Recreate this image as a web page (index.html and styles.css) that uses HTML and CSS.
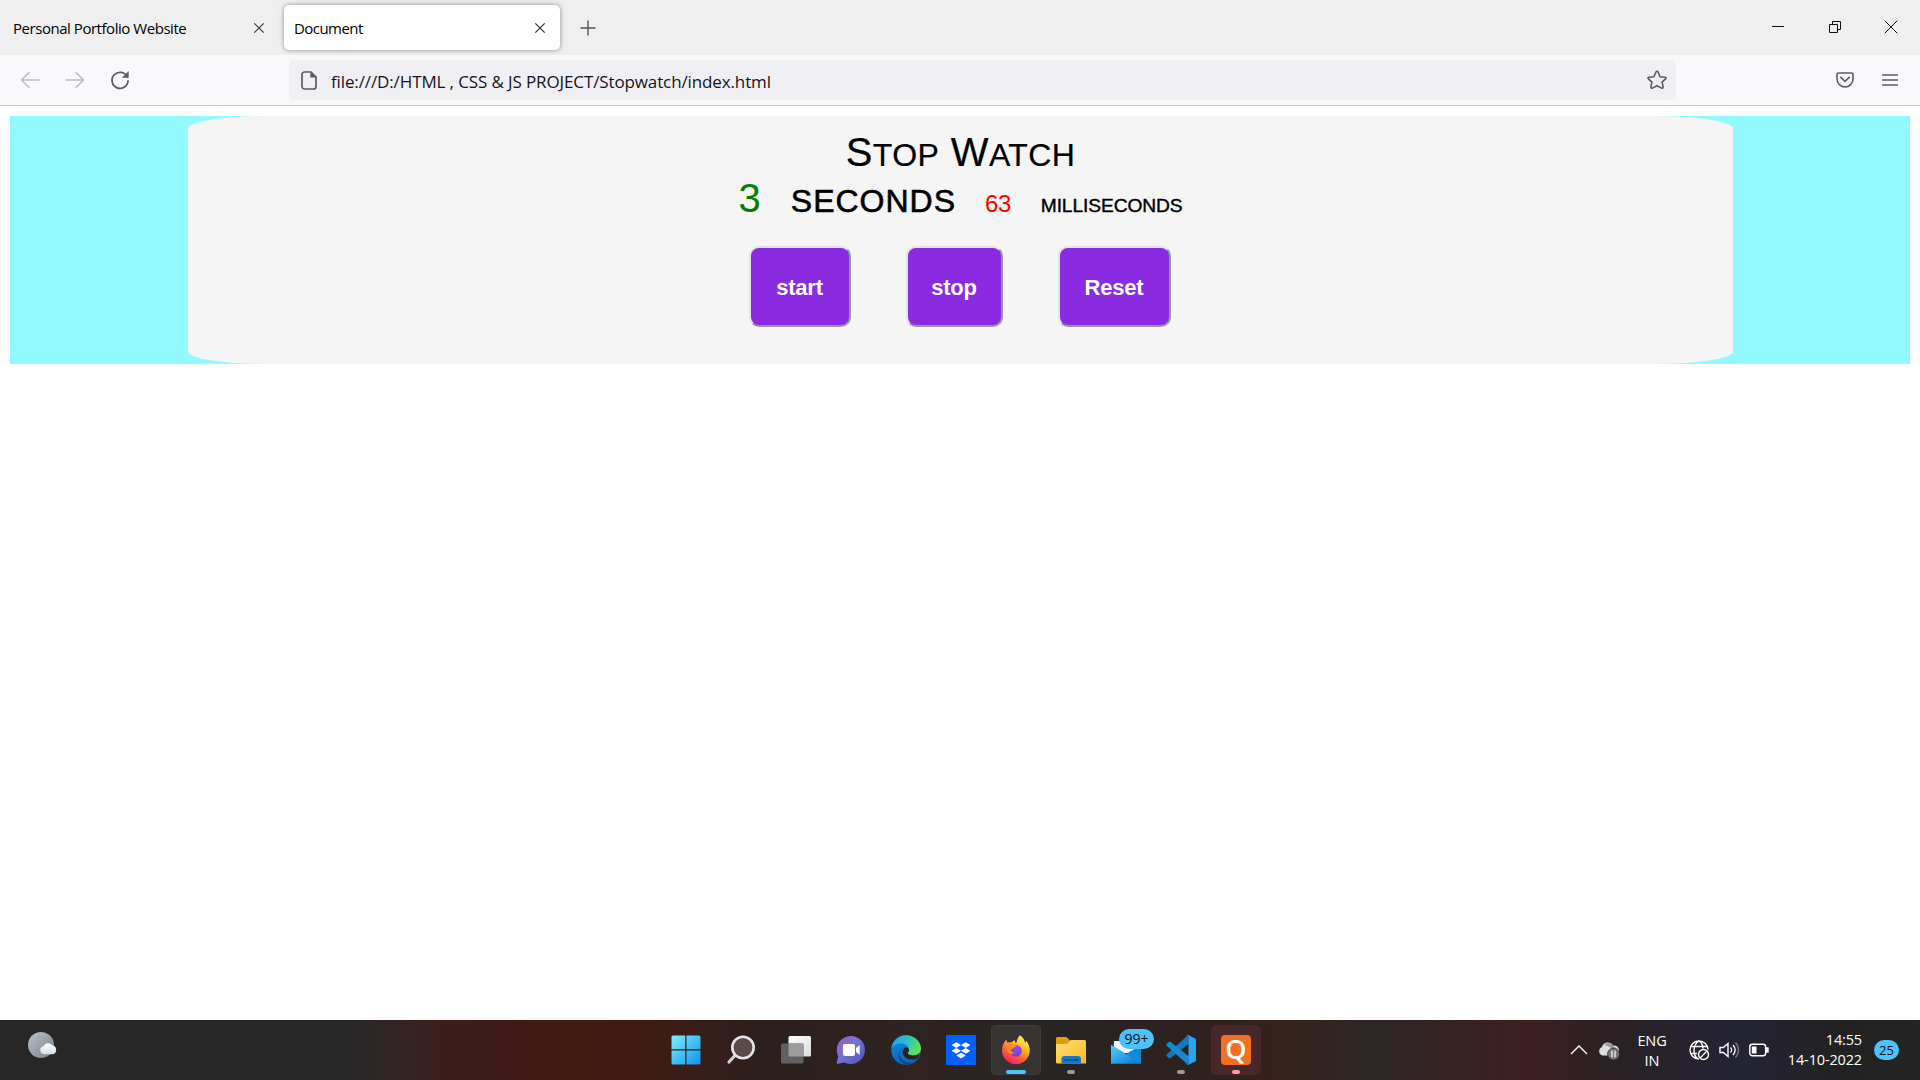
FILE: index.html
```html
<!DOCTYPE html>
<html lang="en">
<head>
<meta charset="utf-8">
<title>Document</title>
<link rel="stylesheet" href="styles.css">
</head>
<body>
<div class="tabs">
  <div class="tab"><span class="tab-name tab-name-long">Personal Portfolio Website</span><svg class="x" viewBox="0 0 12 12"><path d="M1.3 1.3l9.4 9.4M10.7 1.3l-9.4 9.4"/></svg></div>
  <div class="tab active"><span class="tab-name">Document</span><svg class="x" viewBox="0 0 12 12"><path d="M1.3 1.3l9.4 9.4M10.7 1.3l-9.4 9.4"/></svg></div>
  <svg class="plus" viewBox="0 0 16 16"><path d="M8 .5v15M.5 8h15"/></svg>
  <div class="window-buttons">
    <svg viewBox="0 0 14 14"><path d="M1 6.500h12"/></svg>
    <svg viewBox="0 0 14 14"><path d="M1.500 4.500h8v8h-8zM4.500 4V1.500h8v8H10"/></svg>
    <svg viewBox="0 0 14 14"><path d="M.8.8l12.400 12.400M13.200.8L.8 13.200"/></svg>
  </div>
</div>
<div class="toolbar">
  <svg class="nav-icon dim" viewBox="0 0 20 20"><path d="M19 10H1.500M9 2.500L1.500 10 9 17.500"/></svg>
  <svg class="nav-icon dim" viewBox="0 0 20 20"><path d="M1 10h17.500M11 2.500l7.500 7.500-7.500 7.500"/></svg>
  <svg class="nav-icon" viewBox="0 0 20 20"><path d="M17.300 7A8 8 0 1 0 18 11"/><path class="solid" d="M18.700 1v6.800h-6.800z"/></svg>
  <div class="address">
    <svg class="file" viewBox="0 0 16 19"><path d="M3.500 1H10l5 5v9.500a2.500 2.500 0 0 1-2.500 2.500h-9A2.500 2.500 0 0 1 1 15.500v-12A2.500 2.500 0 0 1 3.500 1z"/><path class="solid" d="M9.300 1v5.500H15z"/></svg>
    <span class="url">file:///D:/HTML , CSS &amp; JS PROJECT/Stopwatch/index.html</span>
    <svg class="star" viewBox="0 0 20 20"><path d="M10 1.200c.6 0 .9.400 1.100.8l2 4.700 4.900.5c1.100.1 1.400 1 .6 1.700l-3.500 3.200 1 4.900c.2 1-.6 1.600-1.500 1.100L10 15.700l-4.600 2.400c-.9.500-1.700-.1-1.500-1.100l1-4.900-3.500-3.200c-.8-.7-.5-1.600.6-1.700l4.900-.5 2-4.700c.2-.4.500-.8 1.100-.8z"/></svg>
  </div>
  <div class="tools">
    <svg class="pocket" viewBox="0 0 18 16"><path d="M2.500 1h13A1.500 1.500 0 0 1 17 2.500V7A8 8 0 0 1 1 7V2.500A1.500 1.500 0 0 1 2.500 1zM4.800 5.300L9 9.300l4.200-4"/></svg>
    <svg class="menu" viewBox="0 0 16 14"><path d="M.7 2h14.600M.7 7h14.600M.7 12h14.600"/></svg>
  </div>
</div>
<main class="page">
  <div class="band">
    <section class="watch">
      <div class="title">S<span class="caps">TOP</span> W<span class="caps">ATCH</span></div>
      <div class="readout">
        <span class="sec">3</span><span class="sec-label">SECONDS</span><span class="ms">63</span><span class="ms-label">MILLISECONDS</span>
      </div>
      <div class="actions">
        <button class="start">start</button>
        <button class="stop">stop</button>
        <button class="reset">Reset</button>
      </div>
    </section>
  </div>
</main>
<footer class="taskbar">
  <svg class="weather" viewBox="0 0 30 28">
    <defs>
      <linearGradient id="moon" x1="0" y1="0" x2="1" y2="1"><stop offset="0" stop-color="#b9c2ca"/><stop offset="1" stop-color="#77818b"/></linearGradient>
      <linearGradient id="puff" x1="0" y1="0" x2="0" y2="1"><stop offset="0" stop-color="#fff"/><stop offset="1" stop-color="#d9dde2"/></linearGradient>
    </defs>
    <circle cx="13" cy="13" r="13" fill="url(#moon)"/>
    <path d="M16 22.300a4.200 4.200 0 0 1-.3-8.300 5 5 0 0 1 8.600-.7 4.600 4.600 0 0 1 .4 9z" fill="url(#puff)"/>
  </svg>
  <div class="apps">
    <div class="app"><svg viewBox="0 0 30 30">
      <defs><linearGradient id="win" x1="0" y1="0" x2="1" y2="1"><stop offset="0" stop-color="#7df0fc"/><stop offset="1" stop-color="#0c93ec"/></linearGradient></defs>
      <path fill="url(#win)" d="M2 .5h12.300v13.800H.500V2A1.500 1.500 0 0 1 2 .5zM15.500.5H28a1.500 1.500 0 0 1 1.500 1.500v12.300h-14zM.5 15.500h13.800v14H2A1.500 1.500 0 0 1 .5 28zM15.500 15.500h14V28a1.500 1.500 0 0 1-1.500 1.500H15.500z"/></svg></div>
    <div class="app"><svg viewBox="0 0 30 30"><path d="M8.500 21L3 27" stroke="#d2d2d4" stroke-width="3.200" stroke-linecap="round"/><circle cx="17" cy="12.500" r="10.700" fill="#5b4a47" stroke="#e6e6e8" stroke-width="2.600"/></svg></div>
    <div class="app"><svg viewBox="0 0 30 30">
      <defs><linearGradient id="pane" x1="0" y1="0" x2="1" y2="1"><stop offset="0" stop-color="#fff"/><stop offset="1" stop-color="#dcdcdc"/></linearGradient></defs>
      <rect x="7.500" y="1" width="22.500" height="20.500" rx="1.500" fill="url(#pane)"/><rect x="0" y="8.500" width="22.500" height="20" rx="1.500" fill="#616161"/><path d="M7.500 8.500h15v13H9a1.500 1.500 0 0 1-1.500-1.500z" fill="#9c9c9c"/></svg></div>
    <div class="app"><svg viewBox="0 0 30 30">
      <defs><linearGradient id="chat" x1="0" y1="0" x2="1" y2="1"><stop offset="0" stop-color="#a05bb9"/><stop offset=".45" stop-color="#7574d4"/><stop offset="1" stop-color="#4750bb"/></linearGradient></defs>
      <path d="M15 1a14 14 0 1 1-6.500 26.400L2 28.800c-1 .2-1.600-.4-1.300-1.300l1.600-6A14 14 0 0 1 15 1z" fill="url(#chat)"/><rect x="7" y="9" width="12" height="12" rx="2" fill="#fff"/><path d="M20 13l3.700-3v10L20 17z" fill="#fff"/></svg></div>
    <div class="app"><svg viewBox="0 0 30 30">
      <defs>
        <linearGradient id="edge-top" x1="0" y1=".2" x2="1" y2=".6"><stop offset="0" stop-color="#2b9cdd"/><stop offset=".5" stop-color="#2bc3c7"/><stop offset="1" stop-color="#69e14c"/></linearGradient>
        <linearGradient id="edge-left" x1="0" y1="0" x2="0" y2="1"><stop offset="0" stop-color="#0a8fdd"/><stop offset="1" stop-color="#0b66bf"/></linearGradient>
      </defs>
      <circle cx="15" cy="15" r="14.800" fill="url(#edge-left)"/>
      <path d="M.4 14A14.800 14.800 0 0 1 15 .2C24 .2 30 7 30 13.300c0 4.700-3.700 7.300-7.400 7.300-4.300 0-5.900-1.400-5.900-2.500 0-.7 1.300-1.300 1.300-3.700 0-3.300-3.500-6-8-6-4.700 0-8.500 2.100-9.600 5.600z" fill="url(#edge-top)"/>
      <path d="M12.500 12.500c-5 3.500-6 10 2 14 5 2.300 10 .5 12.700-4A14.800 14.800 0 0 1 15 29.800C9 28 5.500 22 8.500 16.500c1-2 2.500-3.300 4-4z" fill="#124a8f"/>
      <path d="M16.700 18.100c0 1.100 1.600 2.500 5.900 2.500 2.500 0 4.900-1 6.400-3l-1.700 4.800c-3 2.600-9 3-12.300.6-4-2.500-4.200-8-.8-10.700 2.300.2 3.800 1.200 3.800 2.700 0 1.800-1.300 2.400-1.300 3.100z" fill="#2d201f"/></svg></div>
    <div class="app"><svg viewBox="0 0 30 30"><path fill="#0061fe" d="M0 0h30v30H0z"/><path fill="#fff" d="M10.300 7.200L15 10l-4.700 2.900L5.600 10zM19.700 7.200l4.700 2.800-4.700 2.900L15 10zM10.300 12.900l4.700 2.900-4.700 2.900-4.700-2.900zM19.700 12.900l4.700 2.900-4.700 2.900-4.700-2.900zM15 17.800l4.700 2.700L15 23.400l-4.700-2.900z"/></svg></div>
    <div class="app tile current"><svg viewBox="0 0 30 30">
      <defs>
        <linearGradient id="fox" x1=".8" y1="0" x2=".25" y2="1"><stop offset="0" stop-color="#fff44f"/><stop offset=".35" stop-color="#ffbd2e"/><stop offset=".62" stop-color="#ff6b32"/><stop offset="1" stop-color="#f5156c"/></linearGradient>
        <radialGradient id="globe" cx=".6" cy=".2" r=".9"><stop offset="0" stop-color="#a145f2"/><stop offset="1" stop-color="#5b42c4"/></radialGradient>
      </defs>
      <path d="M18.800.2c3.600 2.200 4.700 5 5.300 7.200 1-.2 1-1.200.8-2 2.800 3 3.900 6.500 3.900 9.700A13.900 13.900 0 0 1 1 15.500C1 11 2.600 7.800 5.300 4.600c.2 1.500.7 2.600 1.300 3.200 1.400-.6 2.900-.5 4-.2.8-1.300 2.200-2.200 3.400-2.400-.3 1.300 0 2.300 1.200 2.800C16 6 16.400 2.500 18.800.2z" fill="url(#fox)"/>
      <circle cx="15" cy="15.800" r="5.800" fill="url(#globe)"/>
      <path d="M6.600 8.500c2-.9 4-.6 5.300.2l3.300.6c1 .3.800 1.500-.2 2.200l-2.700 1.600c-.8 1.300-1.800 1.500-3 1.200.5 2.500 2.500 3.600 5 3.400-2.500 2-6.400 1.300-8-1.500-1.200-2.200-1-5 .3-7.700z" fill="#ff8c29"/></svg></div>
    <div class="app open"><svg viewBox="0 0 30 30">
      <defs><linearGradient id="folder" x1="0" y1="0" x2="1" y2="1"><stop offset="0" stop-color="#ffe07b"/><stop offset="1" stop-color="#fbb91a"/></linearGradient></defs>
      <path d="M1.500 2h8.700L14 5.200V11H0V3.500A1.500 1.500 0 0 1 1.500 2z" fill="#dda00d"/><path d="M0 9h9.500c2 0 3-.8 4-2.500.5-.9 1-1.500 2-1.500h13A1.500 1.500 0 0 1 30 6.500v22H1.500A1.500 1.500 0 0 1 0 27z" fill="url(#folder)"/><path d="M5.500 28.500V24a3 3 0 0 1 3-3H22a3 3 0 0 1 3 3v4.500z" fill="#1379cd"/><path d="M9 25h12.500" stroke="#0c5298" stroke-width="1.800" stroke-linecap="round"/></svg></div>
    <div class="app mail"><svg viewBox="0 0 30 30">
      <defs><linearGradient id="mail" x1="0" y1="0" x2="1" y2="1"><stop offset="0" stop-color="#54d0fa"/><stop offset="1" stop-color="#0b74ca"/></linearGradient></defs>
      <path d="M0 10L15 1l15 9v6H0z" fill="#13549a"/><path d="M3 6h24v12H3z" fill="#f4f4f4"/><path d="M0 10l15 9 15-9v18.500H0z" fill="#1688d5"/><path d="M0 10l30 18.500H0z" fill="url(#mail)"/></svg><span class="count">99+</span></div>
    <div class="app open"><svg viewBox="0 0 30 30">
      <path d="M22 .2L1 19c-.8.700-.8 1.500-.1 2.200l1.800 1.700c.6.600 1.300.6 2 .1L23 8.500z" fill="#1279bd"/><path d="M22 29.800L1 11c-.8-.7-.8-1.500-.1-2.200l1.800-1.700c.6-.6 1.300-.6 2-.1L23 21.500z" fill="#168bd2"/><path d="M22 0l6.700 3.200c.8.400 1.300 1.200 1.300 2v19.600c0 .8-.5 1.600-1.300 2L22 30c-.8.200-1.500-.1-2-.7 1 .6 2.500 0 2.500-1.400V2.100c0-1.400-1.500-2-2.500-1.400.5-.6 1.200-.9 2-.7z" fill="#2ba4ec"/></svg></div>
    <div class="app tile alert"><span class="q">Q</span></div>
  </div>
  <div class="tray">
    <svg class="chevron" viewBox="0 0 18 10"><path d="M1 9l8-8 8 8"/></svg>
    <svg class="cloud" viewBox="0 0 22 18"><path d="M4.500 13.500A4.500 4.500 0 0 1 4 5a6 6 0 0 1 11-1.500A5 5 0 0 1 17 13.500z" fill="#dedede"/><path d="M6 3a6 6 0 0 1 10 2c2 .5 3 2 3 4H15C13 5 10 4 6 3z" fill="#999"/><circle cx="15.500" cy="12" r="5.900" fill="#777" stroke="#302428" stroke-width=".8"/><path d="M14 8.800v6.400M17 8.800v6.400" stroke="#fff" stroke-width="1.200"/></svg>
    <div class="lang"><span>ENG</span><span>IN</span></div>
    <div class="status">
      <svg viewBox="0 0 20 20"><path d="M10 19A9 9 0 1 1 19 9.500M10 1C3.500 5 3.500 15 9 19M10 1c3 2 4 5 4 7.500M1.800 6.500h16.400M1.800 13.500H8"/><circle cx="14.500" cy="14.500" r="5"/><path d="M11.300 17.700l6.400-6.400"/></svg>
      <svg viewBox="0 0 20 20"><path d="M1 7.500h3.300L9 3.500v13l-4.700-4H1zM11.500 7.500c1.400 1.400 1.400 3.600 0 5M14 5c2.800 2.800 2.800 7.200 0 10"/><path class="faint" d="M16.500 2.500c4 4.200 4 10.800 0 15"/></svg>
      <svg viewBox="0 0 20 20"><rect x=".8" y="4.300" width="15.800" height="11.400" rx="2.500"/><path d="M17.700 8v4h1.300V8z"/><path class="fill" d="M2.800 6.500h4.700v7H2.800z"/></svg>
    </div>
    <div class="clock"><span>14:55</span><span>14-10-2022</span></div>
    <span class="notices">25</span>
  </div>
</footer>
</body>
</html>
```
FILE: styles.css
```css
* { box-sizing: border-box; }

body {
  margin: 0;
  height: 1080px;
  display: flex;
  flex-direction: column;
  overflow: hidden;
  background: #fff;
  color: #000;
  font-family: "Open Sans", "Noto Sans", sans-serif;
}

svg {
  display: block;
  flex: none;
  fill: none;
  overflow: visible;
}

/* Tab strip */
.tabs {
  display: flex;
  height: 55px;
  padding-top: 5px;
  background: #efefef;
}

.tab {
  display: flex;
  align-items: center;
  justify-content: space-between;
  width: 276px;
  height: 45px;
  padding: 0 14px 0 10px;
  border-radius: 5px;
  font-size: 15px;
}

.tab:first-child {
  width: 278px;
  margin-right: 6px;
  padding: 0 13px;
}

.tab.active {
  background: #fff;
  box-shadow: 0 0 5px rgba(0, 0, 0, .42);
}

.tab-name {
  letter-spacing: -.56px;
  white-space: nowrap;
}

.tab-name-long { letter-spacing: -.46px; }

.x {
  width: 12px;
  height: 12px;
  stroke: #333;
  stroke-width: 1.2;
}

.plus {
  width: 16px;
  height: 16px;
  margin: 15px 0 0 19.5px;
  stroke: #55545f;
  stroke-width: 1.4;
}

.window-buttons {
  display: flex;
  gap: 42.5px;
  margin: 15px 22px 0 auto;
}

.window-buttons svg {
  width: 14px;
  height: 14px;
  stroke: #111;
  stroke-width: 1;
}

/* Navigation */
.toolbar {
  display: flex;
  align-items: center;
  height: 51px;
  padding-left: 20px;
  background: #f9f9fb;
  border-bottom: 1px solid #ccc;
}

.nav-icon {
  width: 20px;
  height: 20px;
  margin-right: 25px;
  stroke: #5b5b66;
  stroke-width: 1.8;
  stroke-linecap: round;
  stroke-linejoin: round;
}

.nav-icon.dim {
  stroke: #bcbcc0;
  stroke-width: 1.6;
}

.solid {
  fill: #5b5b66;
  stroke: none;
}

.address {
  display: flex;
  align-items: center;
  width: 1387px;
  height: 40px;
  margin-left: 134px;
  padding: 0 9px 0 12px;
  border-radius: 5px;
  background: #f0eff4;
}

.file {
  width: 16px;
  height: 19px;
  margin-right: 14px;
  stroke: #5b5b66;
  stroke-width: 1.7;
}

.url {
  padding-top: 2px;
  color: #15141a;
  font-size: 17px;
  letter-spacing: -.12px;
  white-space: pre;
}

.star {
  width: 20px;
  height: 20px;
  margin-left: auto;
  stroke: #5b5b66;
  stroke-width: 1.6;
}

.tools {
  display: flex;
  align-items: center;
  gap: 28px;
  margin: -1px 22px 0 auto;
  stroke: #5b5b66;
  stroke-width: 1.6;
  stroke-linecap: round;
  stroke-linejoin: round;
}

.pocket { width: 18px; height: 16px; }
.menu { width: 16px; height: 14px; }

/* Stopwatch */
.page {
  flex: 1;
  padding: 10px;
  font-family: "Liberation Sans", Arial, sans-serif;
}

.band {
  height: 248px;
  padding: 0 177px 0 178px;
  background: #91f9ff;
}

.watch {
  display: flex;
  flex-direction: column;
  align-items: center;
  height: 248px;
  padding-top: 13px;
  border-radius: 5%;
  background: #f5f5f5;
}

.title {
  height: 46px;
  font-size: 40px;
  line-height: 46px;
  letter-spacing: .4px;
  -webkit-text-stroke: .2px #000;
}

.caps { font-size: 32px; }

.readout {
  display: flex;
  align-items: baseline;
  height: 46px;
  line-height: 46px;
}

.sec {
  color: green;
  font-size: 40px;
  margin-right: 30px;
}

.sec-label {
  font-size: 32px;
  letter-spacing: 1px;
  margin-right: 29px;
  -webkit-text-stroke: .6px #000;
}

.ms {
  color: red;
  font-size: 24px;
  letter-spacing: -.5px;
  margin-right: 30px;
}

.ms-label {
  font-size: 19.2px;
  letter-spacing: -.1px;
  -webkit-text-stroke: .4px #000;
}

.actions {
  display: flex;
  gap: 55px;
  margin: 25px 2px 0 0;
}

.actions button {
  height: 81px;
  padding: 2px 0 0;
  border: 2px solid;
  border-color: #e3e3e3 #979797 #979797 #e3e3e3;
  border-radius: 10px;
  background: #8a2be2;
  color: #fff;
  font: bold 22px "Liberation Sans", Arial, sans-serif;
  letter-spacing: -.2px;
}

.start { width: 102px; }
.stop { width: 97px; }
.reset { width: 113px; }

/* Taskbar */
.taskbar {
  display: grid;
  grid-template-columns: 661px 1fr auto;
  height: 60px;
  background: linear-gradient(90deg, #272727 0, #272727 345px, #332424 400px, #3d1c1a 450px, #401b12 570px, #3d1c16 670px, #2c201f 760px, #2e2320 900px, #282424 1050px, #2e211f 1200px, #35211a 1275px, #2d2725 1370px, #3d1e21 1530px, #2c2123 1600px, #242334 1730px, #222 1850px, #242424);
  color: #fff;
}

.weather {
  width: 30px;
  height: 28px;
  margin: 12px 0 0 28px;
}

.apps {
  display: flex;
  gap: 5px;
  padding-top: 5px;
}

.app {
  position: relative;
  display: flex;
  justify-content: center;
  width: 50px;
  height: 50px;
  padding-top: 10px;
  border-radius: 5px;
}

.app svg { width: 30px; height: 30px; }

.tile { background: #363333; box-shadow: inset 0 0 0 1px #403b3a; }
.alert { background: #47272a; box-shadow: none; }

.app.open::after,
.app.tile::after {
  content: "";
  position: absolute;
  bottom: 1px;
  left: 21px;
  width: 8px;
  height: 4px;
  border-radius: 2px;
  background: #9b9999;
}

.app.current::after {
  left: 15px;
  width: 20px;
  background: #4cc2ff;
}

.app.alert::after { background: #ff99a4; }

.count {
  position: absolute;
  top: 4px;
  left: 18px;
  width: 35px;
  height: 20px;
  border-radius: 10px;
  background: #4cc2ff;
  color: #111;
  font-size: 14px;
  line-height: 20px;
  text-align: center;
}

.q {
  width: 30px;
  height: 30px;
  border-radius: 4px;
  background: #f36f21;
  font: 600 27px/28px "Open Sans", sans-serif;
  text-align: center;
}

.tray {
  display: flex;
  padding-right: 21px;
  font-size: 14.5px;
  line-height: 20px;
}

.chevron {
  width: 18px;
  height: 10px;
  margin: 25px 11px 0 -1px;
  stroke: #fff;
  stroke-width: 1.3;
}

.cloud {
  width: 22px;
  height: 18px;
  margin: 22px 12px 0 -1px;
}

.lang {
  display: flex;
  flex-direction: column;
  align-items: center;
  width: 40px;
  padding-top: 11px;
  letter-spacing: -.1px;
}

.status {
  display: flex;
  gap: 10px;
  margin: 20px 0 0 17px;
  stroke: #fff;
  stroke-width: 1.4;
}

.status svg { width: 20px; height: 20px; }
.faint { stroke: #777; }
.fill { fill: #fff; stroke: none; }

.clock {
  display: flex;
  flex-direction: column;
  align-items: flex-end;
  width: 93px;
  padding-top: 10px;
  letter-spacing: -.15px;
}

.notices {
  width: 25px;
  height: 20px;
  margin: 20px 0 0 12px;
  border-radius: 10px;
  background: #4cc2ff;
  color: #111;
  font-size: 13px;
  text-align: center;
}
```
